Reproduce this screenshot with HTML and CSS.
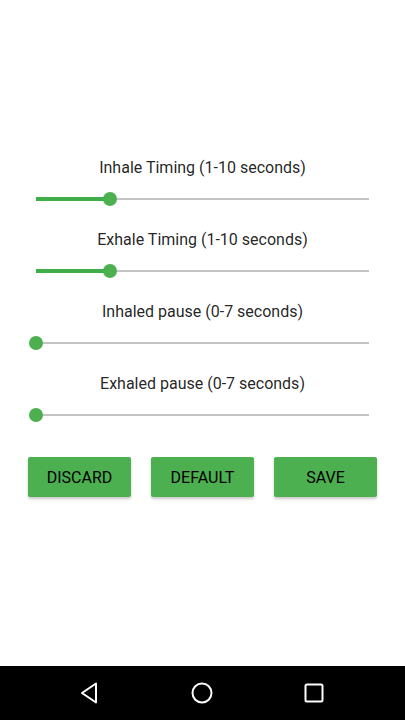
FILE: index.html
```html
<!DOCTYPE html>
<html lang="en">

<head>
  <meta charset="UTF-8" />
  <meta name="viewport" content="width=device-width, initial-scale=1.0" />
  <title>Breathing Settings</title>
  <link rel="stylesheet" href="styles.css">
</head>

<body>
  <div class="screen">

    <!-- Settings -->
    <main class="settings">
      <div class="setting">
        <div class="setting-label">Inhale Timing (1-10 seconds)</div>
        <div class="slider">
          <div class="slider-track"></div>
          <div class="slider-fill" style="width: 22.2%;"></div>
          <div class="slider-thumb" style="left: 22.2%;"></div>
        </div>
      </div>

      <div class="setting">
        <div class="setting-label">Exhale Timing (1-10 seconds)</div>
        <div class="slider">
          <div class="slider-track"></div>
          <div class="slider-fill" style="width: 22.2%;"></div>
          <div class="slider-thumb" style="left: 22.2%;"></div>
        </div>
      </div>

      <div class="setting">
        <div class="setting-label">Inhaled pause (0-7 seconds)</div>
        <div class="slider">
          <div class="slider-track"></div>
          <div class="slider-thumb" style="left: 0%;"></div>
        </div>
      </div>

      <div class="setting">
        <div class="setting-label">Exhaled pause (0-7 seconds)</div>
        <div class="slider">
          <div class="slider-track"></div>
          <div class="slider-thumb" style="left: 0%;"></div>
        </div>
      </div>

      <div class="button-row">
        <button class="action-button">Discard</button>
        <button class="action-button">Default</button>
        <button class="action-button">Save</button>
      </div>
    </main>

    <!-- Navigation bar -->
    <nav class="nav-bar">
      <svg class="nav-icon" width="24" height="24" viewBox="0 0 24 24">
        <path d="M19 2.5 L5 12 L19 21.5 Z" fill="none" stroke="#fff" stroke-width="2" stroke-linejoin="round" />
      </svg>
      <svg class="nav-icon" width="24" height="24" viewBox="0 0 24 24">
        <circle cx="12" cy="12" r="9.5" fill="none" stroke="#fff" stroke-width="2" />
      </svg>
      <svg class="nav-icon" width="24" height="24" viewBox="0 0 24 24">
        <rect x="3.5" y="3.5" width="17" height="17" rx="1.5" fill="none" stroke="#fff" stroke-width="2" />
      </svg>
    </nav>
  </div>
</body>

</html>
```

FILE: styles.css
```css
* {
  box-sizing: border-box;
  margin: 0;
  padding: 0;
}

html,
body {
  font-family: Roboto, 'Noto Sans', sans-serif;
  background-color: #fff;
  color: rgba(0, 0, 0, 0.87);
}

.screen {
  width: 405px;
  height: 720px;
  display: flex;
  flex-direction: column;
}

.settings {
  flex: 1;
  padding-top: 158px;
}

.setting {
  margin-bottom: 23px;
}

.setting-label {
  font-size: 16px;
  line-height: 20px;
  text-align: center;
  margin-bottom: 13px;
}

/* custom slider */
.slider {
  position: relative;
  height: 16px;
  margin: 0 36px;
}

.slider-track {
  position: absolute;
  left: 0;
  right: 0;
  top: 7px;
  height: 2px;
  background-color: #c4c4c4;
}

.slider-fill {
  position: absolute;
  left: 0;
  top: 6px;
  height: 4px;
  background-color: #3fae49;
}

.slider-thumb {
  position: absolute;
  top: 1px;
  width: 14px;
  height: 14px;
  margin-left: -7px;
  border-radius: 50%;
  background-color: #4caf50;
}

.button-row {
  display: flex;
  justify-content: center;
  gap: 20px;
  margin-top: 34px;
}

.action-button {
  width: 103px;
  height: 40px;
  border: none;
  border-radius: 2px;
  background-color: #4caf50;
  color: #000;
  font-family: Roboto, 'Noto Sans', sans-serif;
  font-size: 16px;
  font-weight: 400;
  text-transform: uppercase;
  box-shadow: 0 2px 3px rgba(0, 0, 0, 0.22);
  cursor: pointer;
}

.nav-bar {
  height: 54px;
  background-color: #000;
  display: flex;
  justify-content: space-between;
  align-items: center;
  padding: 0 79px 0 77px;
}

.nav-icon {
  display: block;
}
```
